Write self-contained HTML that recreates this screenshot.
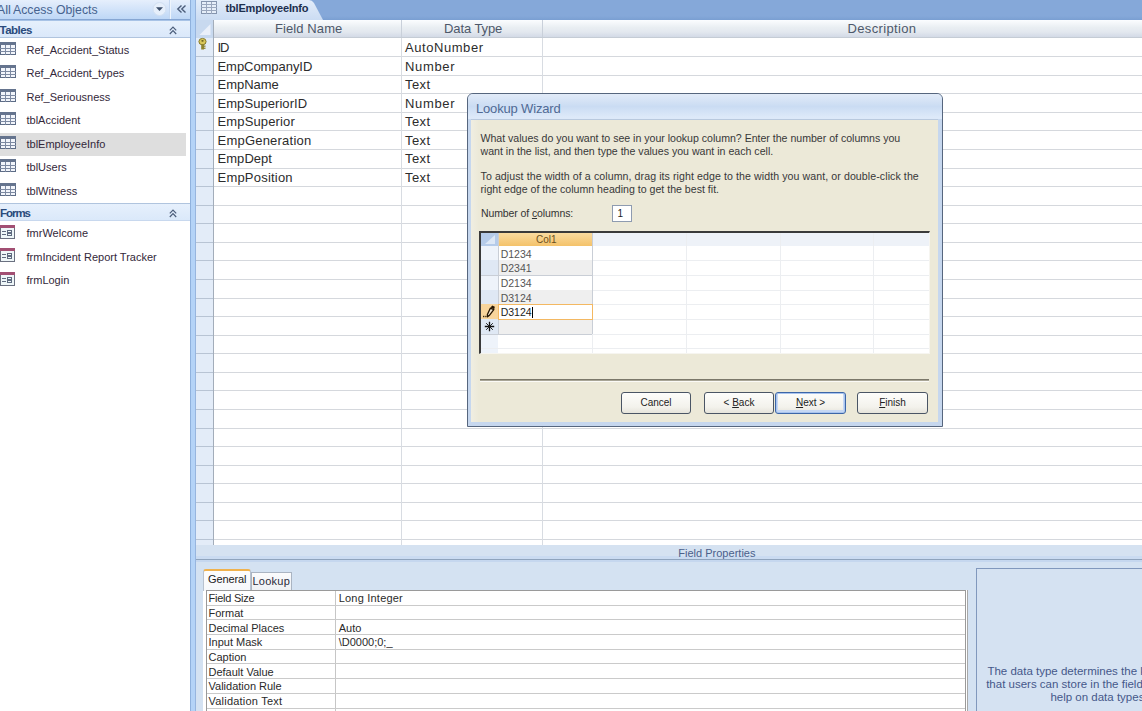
<!DOCTYPE html>
<html><head><meta charset="utf-8">
<style>
*{margin:0;padding:0;box-sizing:border-box}
html,body{width:1142px;height:711px;overflow:hidden;background:#fff;font-family:"Liberation Sans",sans-serif}
.a{position:absolute}
.t{position:absolute;white-space:nowrap;line-height:1}
svg.a{overflow:visible}
</style></head><body>
<div class="a" style="left:0px;top:0px;width:190px;height:711px;background:#fff"></div>
<div class="a" style="left:0px;top:0px;width:190px;height:19px;background:linear-gradient(#e6effc,#bed7f6)"></div>
<div class="t" style="left:-3.5px;top:3px;font-size:13px;color:#46638f;">All</div>
<div class="t" style="left:12.9px;top:3px;font-size:13px;color:#46638f;transform:scaleX(0.944);transform-origin:0 0">Access Objects</div>
<div class="a" style="left:169px;top:0px;width:1px;height:19px;background:#c4d7f0"></div>
<div class="a" style="left:170px;top:0px;width:1px;height:19px;background:#eef5fd"></div>
<svg class="a" style="left:150px;top:0" width="40" height="19"><circle cx="9.5" cy="9" r="6.5" fill="#e6effb" stroke="#d2e0f2"/><path d="M6 7.2 H13 L9.5 11 Z" fill="#3d4f6a"/><path d="M31.5 5.5 L27.8 9 L31.5 12.5 M35.5 5.5 L31.8 9 L35.5 12.5" fill="none" stroke="#4b5d7a" stroke-width="1.4"/></svg>
<div class="a" style="left:0px;top:19px;width:190px;height:1px;background:#86a6d3"></div>
<div class="a" style="left:0px;top:20px;width:190px;height:1px;background:#a8c3e6"></div>
<div class="a" style="left:0px;top:21px;width:190px;height:17px;background:linear-gradient(#e6f0fc,#dae8fa)"></div>
<div class="a" style="left:0px;top:37px;width:190px;height:1px;background:#b0c4de"></div>
<div class="t" style="left:-0.5px;top:25px;font-size:11.5px;color:#2a4a7c;font-weight:bold;letter-spacing:-0.516px;">Tables</div>
<svg class="a" style="left:165px;top:22px" width="16" height="16"><path d="M4.8 8.3 L8 5 L11.2 8.3 M4.8 12 L8 8.7 L11.2 12" fill="none" stroke="#4b5d7a" stroke-width="1.2"/></svg>
<div class="a" style="left:0px;top:133px;width:186px;height:23px;background:#dedede"></div>
<div class="a" style="left:0px;top:203px;width:190px;height:1px;background:#b0c4de"></div>
<div class="a" style="left:0px;top:204px;width:190px;height:17px;background:linear-gradient(#e6f0fc,#dae8fa)"></div>
<div class="a" style="left:0px;top:220px;width:190px;height:1px;background:#c8d8ee"></div>
<div class="t" style="left:0px;top:208px;font-size:11.5px;color:#2a4a7c;font-weight:bold;letter-spacing:-1.039px;">Forms</div>
<svg class="a" style="left:165px;top:205px" width="16" height="16"><path d="M4.8 8.3 L8 5 L11.2 8.3 M4.8 12 L8 8.7 L11.2 12" fill="none" stroke="#4b5d7a" stroke-width="1.2"/></svg>
<svg class="a" style="left:0px;top:42px" width="17" height="14"><rect x="0.5" y="0.5" width="15" height="12" fill="#f2f5fb" stroke="#5d6c86"/><rect x="0" y="0" width="16" height="3" fill="#65748e"/><path d="M0 6.5 H16 M0 9.5 H16 M5.5 3 V13 M10.5 3 V13" stroke="#7d8aa2" stroke-width="1"/></svg>
<div class="t" style="left:26.5px;top:45px;font-size:11px;color:#33283a;">Ref_Accident_Status</div>
<svg class="a" style="left:0px;top:65px" width="17" height="14"><rect x="0.5" y="0.5" width="15" height="12" fill="#f2f5fb" stroke="#5d6c86"/><rect x="0" y="0" width="16" height="3" fill="#65748e"/><path d="M0 6.5 H16 M0 9.5 H16 M5.5 3 V13 M10.5 3 V13" stroke="#7d8aa2" stroke-width="1"/></svg>
<div class="t" style="left:26.5px;top:68px;font-size:11px;color:#33283a;">Ref_Accident_types</div>
<svg class="a" style="left:0px;top:89px" width="17" height="14"><rect x="0.5" y="0.5" width="15" height="12" fill="#f2f5fb" stroke="#5d6c86"/><rect x="0" y="0" width="16" height="3" fill="#65748e"/><path d="M0 6.5 H16 M0 9.5 H16 M5.5 3 V13 M10.5 3 V13" stroke="#7d8aa2" stroke-width="1"/></svg>
<div class="t" style="left:26.5px;top:92px;font-size:11px;color:#33283a;">Ref_Seriousness</div>
<svg class="a" style="left:0px;top:112px" width="17" height="14"><rect x="0.5" y="0.5" width="15" height="12" fill="#f2f5fb" stroke="#5d6c86"/><rect x="0" y="0" width="16" height="3" fill="#65748e"/><path d="M0 6.5 H16 M0 9.5 H16 M5.5 3 V13 M10.5 3 V13" stroke="#7d8aa2" stroke-width="1"/></svg>
<div class="t" style="left:26.5px;top:115px;font-size:11px;color:#33283a;">tblAccident</div>
<svg class="a" style="left:0px;top:136px" width="17" height="14"><rect x="0.5" y="0.5" width="15" height="12" fill="#f2f5fb" stroke="#5d6c86"/><rect x="0" y="0" width="16" height="3" fill="#65748e"/><path d="M0 6.5 H16 M0 9.5 H16 M5.5 3 V13 M10.5 3 V13" stroke="#7d8aa2" stroke-width="1"/></svg>
<div class="t" style="left:26.5px;top:139px;font-size:11px;color:#33283a;">tblEmployeeInfo</div>
<svg class="a" style="left:0px;top:159px" width="17" height="14"><rect x="0.5" y="0.5" width="15" height="12" fill="#f2f5fb" stroke="#5d6c86"/><rect x="0" y="0" width="16" height="3" fill="#65748e"/><path d="M0 6.5 H16 M0 9.5 H16 M5.5 3 V13 M10.5 3 V13" stroke="#7d8aa2" stroke-width="1"/></svg>
<div class="t" style="left:26.5px;top:162px;font-size:11px;color:#33283a;">tblUsers</div>
<svg class="a" style="left:0px;top:183px" width="17" height="14"><rect x="0.5" y="0.5" width="15" height="12" fill="#f2f5fb" stroke="#5d6c86"/><rect x="0" y="0" width="16" height="3" fill="#65748e"/><path d="M0 6.5 H16 M0 9.5 H16 M5.5 3 V13 M10.5 3 V13" stroke="#7d8aa2" stroke-width="1"/></svg>
<div class="t" style="left:26.5px;top:186px;font-size:11px;color:#33283a;">tblWitness</div>
<svg class="a" style="left:0px;top:225px" width="16" height="15"><rect x="0.5" y="0.5" width="14" height="13" fill="#eef6f8" stroke="#6a7080"/><rect x="0" y="0" width="15" height="3" fill="#a24f73"/><path d="M2 6.5 H6 M2 9.5 H6" stroke="#5f6b80" stroke-width="1"/><rect x="7.5" y="5.5" width="4" height="2" fill="none" stroke="#5f6b80"/><rect x="7.5" y="8.5" width="4" height="2" fill="none" stroke="#5f6b80"/></svg>
<div class="t" style="left:26.5px;top:228px;font-size:11px;color:#33283a;">fmrWelcome</div>
<svg class="a" style="left:0px;top:248px" width="16" height="15"><rect x="0.5" y="0.5" width="14" height="13" fill="#eef6f8" stroke="#6a7080"/><rect x="0" y="0" width="15" height="3" fill="#a24f73"/><path d="M2 6.5 H6 M2 9.5 H6" stroke="#5f6b80" stroke-width="1"/><rect x="7.5" y="5.5" width="4" height="2" fill="none" stroke="#5f6b80"/><rect x="7.5" y="8.5" width="4" height="2" fill="none" stroke="#5f6b80"/></svg>
<div class="t" style="left:26.5px;top:252px;font-size:11px;color:#33283a;">frmIncident Report Tracker</div>
<svg class="a" style="left:0px;top:272px" width="16" height="15"><rect x="0.5" y="0.5" width="14" height="13" fill="#eef6f8" stroke="#6a7080"/><rect x="0" y="0" width="15" height="3" fill="#a24f73"/><path d="M2 6.5 H6 M2 9.5 H6" stroke="#5f6b80" stroke-width="1"/><rect x="7.5" y="5.5" width="4" height="2" fill="none" stroke="#5f6b80"/><rect x="7.5" y="8.5" width="4" height="2" fill="none" stroke="#5f6b80"/></svg>
<div class="t" style="left:26.5px;top:275px;font-size:11px;color:#33283a;">frmLogin</div>
<div class="a" style="left:190px;top:0px;width:1px;height:711px;background:#8fb1dd"></div>
<div class="a" style="left:191px;top:0px;width:4px;height:711px;background:#b4d3f7"></div>
<div class="a" style="left:195px;top:0px;width:1px;height:711px;background:#97b5de"></div>
<div class="a" style="left:196px;top:0px;width:946px;height:20px;background:linear-gradient(#85a8d9 80%,#7a9fd2)"></div>
<svg class="a" style="left:196px;top:0" width="130" height="20"><defs><linearGradient id="tg" x1="0" y1="0" x2="0" y2="1"><stop offset="0" stop-color="#e2ecf9"/><stop offset="1" stop-color="#cbdcf3"/></linearGradient></defs><path d="M0 0 H113 Q116 0 118 3 L127 20 H0 Z" fill="url(#tg)"/></svg>
<svg class="a" style="left:201px;top:1px" width="17" height="14"><rect x="0.5" y="0.5" width="15" height="12" fill="#e6eef9" stroke="#8494ae"/><path d="M0 3.5 H16 M0 6.5 H16 M0 9.5 H16 M5.5 1 V13 M10.5 1 V13" stroke="#9aa7be" stroke-width="1"/></svg>
<div class="t" style="left:225.5px;top:3px;font-size:11px;color:#1d2f4e;font-weight:bold;letter-spacing:-0.183px;">tblEmployeeInfo</div>
<div class="a" style="left:196px;top:20px;width:946px;height:525px;background:#fff"></div>
<div class="a" style="left:213px;top:20px;width:929px;height:17px;background:linear-gradient(#fbfdff,#e9eef2 45%,#e3e8ef 70%,#d3dae6)"></div>
<div class="a" style="left:196px;top:37px;width:946px;height:1px;background:#c5ccd5"></div>
<div class="a" style="left:196px;top:20px;width:17px;height:18px;background:#c8d9ef"></div>
<svg class="a" style="left:196px;top:20px" width="17" height="18"><path d="M14.5 4 V15 H3.5 Z" fill="#eaf0fa"/></svg>
<div class="a" style="left:196px;top:38px;width:17px;height:507px;background:#e3ecf8"></div>
<div class="a" style="left:213px;top:20px;width:1px;height:525px;background:#a3adba"></div>
<div class="a" style="left:214px;top:56px;width:928px;height:1px;background:#d5d8dd"></div>
<div class="a" style="left:196px;top:56px;width:17px;height:1px;background:#b8c4d4"></div>
<div class="a" style="left:214px;top:75px;width:928px;height:1px;background:#d5d8dd"></div>
<div class="a" style="left:196px;top:75px;width:17px;height:1px;background:#b8c4d4"></div>
<div class="a" style="left:214px;top:93px;width:928px;height:1px;background:#d5d8dd"></div>
<div class="a" style="left:196px;top:93px;width:17px;height:1px;background:#b8c4d4"></div>
<div class="a" style="left:214px;top:112px;width:928px;height:1px;background:#d5d8dd"></div>
<div class="a" style="left:196px;top:112px;width:17px;height:1px;background:#b8c4d4"></div>
<div class="a" style="left:214px;top:130px;width:928px;height:1px;background:#d5d8dd"></div>
<div class="a" style="left:196px;top:130px;width:17px;height:1px;background:#b8c4d4"></div>
<div class="a" style="left:214px;top:149px;width:928px;height:1px;background:#d5d8dd"></div>
<div class="a" style="left:196px;top:149px;width:17px;height:1px;background:#b8c4d4"></div>
<div class="a" style="left:214px;top:168px;width:928px;height:1px;background:#d5d8dd"></div>
<div class="a" style="left:196px;top:168px;width:17px;height:1px;background:#b8c4d4"></div>
<div class="a" style="left:214px;top:186px;width:928px;height:1px;background:#d5d8dd"></div>
<div class="a" style="left:196px;top:186px;width:17px;height:1px;background:#b8c4d4"></div>
<div class="a" style="left:214px;top:205px;width:928px;height:1px;background:#d5d8dd"></div>
<div class="a" style="left:196px;top:205px;width:17px;height:1px;background:#b8c4d4"></div>
<div class="a" style="left:214px;top:223px;width:928px;height:1px;background:#d5d8dd"></div>
<div class="a" style="left:196px;top:223px;width:17px;height:1px;background:#b8c4d4"></div>
<div class="a" style="left:214px;top:242px;width:928px;height:1px;background:#d5d8dd"></div>
<div class="a" style="left:196px;top:242px;width:17px;height:1px;background:#b8c4d4"></div>
<div class="a" style="left:214px;top:260px;width:928px;height:1px;background:#d5d8dd"></div>
<div class="a" style="left:196px;top:260px;width:17px;height:1px;background:#b8c4d4"></div>
<div class="a" style="left:214px;top:279px;width:928px;height:1px;background:#d5d8dd"></div>
<div class="a" style="left:196px;top:279px;width:17px;height:1px;background:#b8c4d4"></div>
<div class="a" style="left:214px;top:298px;width:928px;height:1px;background:#d5d8dd"></div>
<div class="a" style="left:196px;top:298px;width:17px;height:1px;background:#b8c4d4"></div>
<div class="a" style="left:214px;top:316px;width:928px;height:1px;background:#d5d8dd"></div>
<div class="a" style="left:196px;top:316px;width:17px;height:1px;background:#b8c4d4"></div>
<div class="a" style="left:214px;top:335px;width:928px;height:1px;background:#d5d8dd"></div>
<div class="a" style="left:196px;top:335px;width:17px;height:1px;background:#b8c4d4"></div>
<div class="a" style="left:214px;top:353px;width:928px;height:1px;background:#d5d8dd"></div>
<div class="a" style="left:196px;top:353px;width:17px;height:1px;background:#b8c4d4"></div>
<div class="a" style="left:214px;top:372px;width:928px;height:1px;background:#d5d8dd"></div>
<div class="a" style="left:196px;top:372px;width:17px;height:1px;background:#b8c4d4"></div>
<div class="a" style="left:214px;top:390px;width:928px;height:1px;background:#d5d8dd"></div>
<div class="a" style="left:196px;top:390px;width:17px;height:1px;background:#b8c4d4"></div>
<div class="a" style="left:214px;top:409px;width:928px;height:1px;background:#d5d8dd"></div>
<div class="a" style="left:196px;top:409px;width:17px;height:1px;background:#b8c4d4"></div>
<div class="a" style="left:214px;top:428px;width:928px;height:1px;background:#d5d8dd"></div>
<div class="a" style="left:196px;top:428px;width:17px;height:1px;background:#b8c4d4"></div>
<div class="a" style="left:214px;top:446px;width:928px;height:1px;background:#d5d8dd"></div>
<div class="a" style="left:196px;top:446px;width:17px;height:1px;background:#b8c4d4"></div>
<div class="a" style="left:214px;top:465px;width:928px;height:1px;background:#d5d8dd"></div>
<div class="a" style="left:196px;top:465px;width:17px;height:1px;background:#b8c4d4"></div>
<div class="a" style="left:214px;top:483px;width:928px;height:1px;background:#d5d8dd"></div>
<div class="a" style="left:196px;top:483px;width:17px;height:1px;background:#b8c4d4"></div>
<div class="a" style="left:214px;top:502px;width:928px;height:1px;background:#d5d8dd"></div>
<div class="a" style="left:196px;top:502px;width:17px;height:1px;background:#b8c4d4"></div>
<div class="a" style="left:214px;top:520px;width:928px;height:1px;background:#d5d8dd"></div>
<div class="a" style="left:196px;top:520px;width:17px;height:1px;background:#b8c4d4"></div>
<div class="a" style="left:214px;top:539px;width:928px;height:1px;background:#d5d8dd"></div>
<div class="a" style="left:196px;top:539px;width:17px;height:1px;background:#b8c4d4"></div>
<div class="a" style="left:401px;top:38px;width:1px;height:507px;background:#d8dce2"></div>
<div class="a" style="left:542px;top:38px;width:1px;height:507px;background:#d8dce2"></div>
<div class="a" style="left:401px;top:20px;width:1px;height:17px;background:#c9d0da"></div>
<div class="a" style="left:542px;top:20px;width:1px;height:17px;background:#c9d0da"></div>
<div class="t" style="left:275px;top:22px;font-size:13px;color:#4d586a;letter-spacing:0.092px;">Field Name</div>
<div class="t" style="left:444px;top:22px;font-size:13px;color:#4d586a;letter-spacing:-0.091px;">Data Type</div>
<div class="t" style="left:847.5px;top:22px;font-size:13px;color:#4d586a;letter-spacing:0.357px;">Description</div>
<div class="t" style="left:217.5px;top:41px;font-size:13px;color:#2c2c2c;letter-spacing:-1.2px;">ID</div>
<div class="t" style="left:405px;top:41px;font-size:13px;color:#2c2c2c;letter-spacing:0.557px;">AutoNumber</div>
<div class="t" style="left:217.5px;top:60px;font-size:13px;color:#2c2c2c;letter-spacing:-0.052px;">EmpCompanyID</div>
<div class="t" style="left:405px;top:60px;font-size:13px;color:#2c2c2c;letter-spacing:0.67px;">Number</div>
<div class="t" style="left:217.5px;top:78px;font-size:13px;color:#2c2c2c;letter-spacing:-0.02px;">EmpName</div>
<div class="t" style="left:405px;top:78px;font-size:13px;color:#2c2c2c;letter-spacing:0.385px;">Text</div>
<div class="t" style="left:217.5px;top:97px;font-size:13px;color:#2c2c2c;letter-spacing:0.06px;">EmpSuperiorID</div>
<div class="t" style="left:405px;top:97px;font-size:13px;color:#2c2c2c;letter-spacing:0.67px;">Number</div>
<div class="t" style="left:217.5px;top:115px;font-size:13px;color:#2c2c2c;letter-spacing:0.142px;">EmpSuperior</div>
<div class="t" style="left:405px;top:115px;font-size:13px;color:#2c2c2c;letter-spacing:0.385px;">Text</div>
<div class="t" style="left:217.5px;top:134px;font-size:13px;color:#2c2c2c;letter-spacing:0.22px;">EmpGeneration</div>
<div class="t" style="left:405px;top:134px;font-size:13px;color:#2c2c2c;letter-spacing:0.385px;">Text</div>
<div class="t" style="left:217.5px;top:152px;font-size:13px;color:#2c2c2c;letter-spacing:0.049px;">EmpDept</div>
<div class="t" style="left:405px;top:152px;font-size:13px;color:#2c2c2c;letter-spacing:0.385px;">Text</div>
<div class="t" style="left:217.5px;top:171px;font-size:13px;color:#2c2c2c;letter-spacing:0.212px;">EmpPosition</div>
<div class="t" style="left:405px;top:171px;font-size:13px;color:#2c2c2c;letter-spacing:0.385px;">Text</div>
<svg class="a" style="left:197px;top:38px" width="12" height="13"><ellipse cx="5.5" cy="3.6" rx="3.6" ry="3.2" fill="#d8c65a" stroke="#857a2c" stroke-width="1"/><ellipse cx="5.5" cy="2.8" rx="1.2" ry="0.9" fill="#6a611e"/><rect x="4.2" y="6" width="2.8" height="5.5" fill="#8f8430"/><rect x="6.5" y="7.5" width="2" height="1.3" fill="#8f8430"/><rect x="6.5" y="9.6" width="2" height="1.3" fill="#8f8430"/></svg>
<div class="a" style="left:196px;top:545px;width:946px;height:166px;background:#d4e2f2"></div>
<div class="a" style="left:196px;top:545px;width:946px;height:11px;background:#d5e2f1"></div>
<div class="a" style="left:196px;top:556px;width:946px;height:3px;background:#cadbf1"></div>
<div class="a" style="left:196px;top:559px;width:946px;height:1px;background:#8fa4bd"></div>
<div class="a" style="left:196px;top:560px;width:946px;height:2px;background:#c5d7ef"></div>
<div class="t" style="left:678.2px;top:548px;font-size:11px;color:#4a5f8c;letter-spacing:0.017px;">Field Properties</div>
<div class="a" style="left:203px;top:589px;width:4px;height:122px;background:#fff"></div>
<div class="a" style="left:203px;top:569px;width:48px;height:22px;background:linear-gradient(#fdfdfd,#f6f8fb);border:1px solid #b8c2cf;border-bottom:none;border-top:2px solid #f0b24e;border-radius:3px 3px 0 0"></div>
<div class="a" style="left:251px;top:572px;width:41px;height:18px;background:linear-gradient(#fbfbfc,#eef1f5);border:1px solid #aab4c2;border-bottom:none"></div>
<div class="t" style="left:208px;top:574px;font-size:11px;color:#222;letter-spacing:-0.123px;">General</div>
<div class="t" style="left:252.5px;top:576px;font-size:11px;color:#2a2a3a;letter-spacing:0.241px;">Lookup</div>
<div class="a" style="left:206px;top:590px;width:760px;height:121px;background:#fff;border:1px solid #9a9a9a;border-bottom:none;border-right:none"></div>
<div class="a" style="left:965px;top:590px;width:1px;height:121px;background:#9a9a9a"></div>
<div class="a" style="left:967px;top:590px;width:1px;height:121px;background:#a8a8a8"></div>
<div class="a" style="left:966px;top:590px;width:1px;height:121px;background:#fff"></div>
<div class="a" style="left:335px;top:591px;width:1px;height:120px;background:#c6c6c6"></div>
<div class="a" style="left:207px;top:605px;width:758px;height:1px;background:#cacaca"></div>
<div class="t" style="left:208.5px;top:593px;font-size:11px;color:#2a2a2a;letter-spacing:-0.233px;">Field Size</div>
<div class="t" style="left:338.7px;top:593px;font-size:11px;color:#2a2a2a;letter-spacing:0.211px;">Long Integer</div>
<div class="a" style="left:207px;top:619px;width:758px;height:1px;background:#cacaca"></div>
<div class="t" style="left:208.5px;top:608px;font-size:11px;color:#2a2a2a;">Format</div>
<div class="a" style="left:207px;top:634px;width:758px;height:1px;background:#cacaca"></div>
<div class="t" style="left:208.5px;top:623px;font-size:11px;color:#2a2a2a;">Decimal Places</div>
<div class="t" style="left:338.7px;top:623px;font-size:11px;color:#2a2a2a;">Auto</div>
<div class="a" style="left:207px;top:649px;width:758px;height:1px;background:#cacaca"></div>
<div class="t" style="left:208.5px;top:637px;font-size:11px;color:#2a2a2a;">Input Mask</div>
<div class="t" style="left:338.7px;top:637px;font-size:11px;color:#2a2a2a;">\D0000;0;_</div>
<div class="a" style="left:207px;top:663px;width:758px;height:1px;background:#cacaca"></div>
<div class="t" style="left:208.5px;top:652px;font-size:11px;color:#2a2a2a;">Caption</div>
<div class="a" style="left:207px;top:678px;width:758px;height:1px;background:#cacaca"></div>
<div class="t" style="left:208.5px;top:667px;font-size:11px;color:#2a2a2a;">Default Value</div>
<div class="a" style="left:207px;top:693px;width:758px;height:1px;background:#cacaca"></div>
<div class="t" style="left:208.5px;top:681px;font-size:11px;color:#2a2a2a;">Validation Rule</div>
<div class="a" style="left:207px;top:708px;width:758px;height:1px;background:#cacaca"></div>
<div class="t" style="left:208.5px;top:696px;font-size:11px;color:#2a2a2a;letter-spacing:0.219px;">Validation Text</div>
<div class="a" style="left:976px;top:568px;width:166px;height:143px;background:#d5e2f2;border-left:1px solid #8198bd;border-top:1px solid #8198bd"></div>
<div class="t" style="left:979px;top:666px;width:240px;font-size:11.5px;color:#45588a;text-align:center">The data type determines the kind of values</div>
<div class="t" style="left:979px;top:679px;width:240px;font-size:11.5px;color:#45588a;text-align:center">that users can store in the field. Press F1 for</div>
<div class="t" style="left:979px;top:692px;width:240px;font-size:11.5px;color:#45588a;text-align:center">help on data types.</div>
<div class="a" style="left:467px;top:93px;width:476px;height:334px;border:1px solid #56667e;border-radius:6px 6px 0 0;background:#c6d7ee"></div>
<div class="a" style="left:468px;top:94px;width:474px;height:25px;background:linear-gradient(#e2ebf8,#cadcf3 50%,#dde9f9 92%);border-radius:5px 5px 0 0"></div>
<div class="a" style="left:471px;top:119px;width:467px;height:1px;background:#b9c9de"></div>
<div class="a" style="left:471px;top:120px;width:467px;height:302px;background:#ece9d8"></div>
<div class="a" style="left:471px;top:120px;width:8px;height:302px;background:linear-gradient(90deg,#f0eee2,#ece9d8)"></div>
<div class="t" style="left:476px;top:102px;font-size:13px;color:#506a94;letter-spacing:-0.168px;">Lookup Wizard</div>
<div class="t" style="left:480.5px;top:133px;font-size:10.6px;color:#383838;letter-spacing:-0.016px;">What values do you want to see in your lookup column? Enter the number of columns you</div>
<div class="t" style="left:480.5px;top:146px;font-size:10.6px;color:#383838;">want in the list, and then type the values you want in each cell.</div>
<div class="t" style="left:480.5px;top:171px;font-size:10.6px;color:#383838;letter-spacing:0.083px;">To adjust the width of a column, drag its right edge to the width you want, or double-click the</div>
<div class="t" style="left:480.5px;top:184px;font-size:10.6px;color:#383838;">right edge of the column heading to get the best fit.</div>
<div class="t" style="left:481px;top:208px;font-size:10.5px;color:#333;letter-spacing:-0.102px;">Number of <u>c</u>olumns:</div>
<div class="a" style="left:612px;top:205px;width:20px;height:17px;background:#fff;border:1px solid #8e9bb0"></div>
<div class="t" style="left:617.5px;top:209px;font-size:10px;color:#222;">1</div>
<div class="a" style="left:479px;top:231px;width:451px;height:123px;background:#fff;border-top:2px solid #3a3a3a;border-left:2px solid #3a3a3a;border-right:1px solid #f6f5f0;border-bottom:1px solid #f6f5f0"></div>
<div class="a" style="left:481px;top:233px;width:448px;height:13px;background:#eef2f8"></div>
<div class="a" style="left:498px;top:233px;width:94px;height:13px;background:linear-gradient(#fadb9f,#f4c26a)"></div>
<div class="a" style="left:481px;top:233px;width:17px;height:13px;background:#b5cbe9"></div>
<svg class="a" style="left:481px;top:233px" width="17" height="13"><path d="M14 2 V11 H4 Z" fill="#dde8f6"/></svg>
<div class="t" style="left:536px;top:235px;font-size:10px;color:#6b5020;">Col1</div>
<div class="a" style="left:481px;top:246px;width:17px;height:107px;background:#eef3fa"></div>
<div class="a" style="left:481px;top:260px;width:448px;height:1px;background:#eceef1"></div>
<div class="a" style="left:481px;top:260px;width:112px;height:1px;background:#c9ced6"></div>
<div class="t" style="left:500.7px;top:249px;font-size:10.5px;color:#555;">D1234</div>
<div class="a" style="left:498px;top:260px;width:94px;height:15px;background:#efefef"></div>
<div class="a" style="left:481px;top:260px;width:17px;height:15px;background:#dfe8f4"></div>
<div class="a" style="left:481px;top:275px;width:448px;height:1px;background:#eceef1"></div>
<div class="a" style="left:481px;top:275px;width:112px;height:1px;background:#c9ced6"></div>
<div class="t" style="left:500.7px;top:263px;font-size:10.5px;color:#555;">D2341</div>
<div class="a" style="left:481px;top:290px;width:448px;height:1px;background:#eceef1"></div>
<div class="a" style="left:481px;top:290px;width:112px;height:1px;background:#c9ced6"></div>
<div class="t" style="left:500.7px;top:278px;font-size:10.5px;color:#555;">D2134</div>
<div class="a" style="left:498px;top:290px;width:94px;height:14px;background:#efefef"></div>
<div class="a" style="left:481px;top:290px;width:17px;height:14px;background:#dfe8f4"></div>
<div class="a" style="left:481px;top:304px;width:448px;height:1px;background:#eceef1"></div>
<div class="a" style="left:481px;top:304px;width:112px;height:1px;background:#c9ced6"></div>
<div class="t" style="left:500.7px;top:293px;font-size:10.5px;color:#555;">D3124</div>
<div class="a" style="left:481px;top:319px;width:448px;height:1px;background:#eceef1"></div>
<div class="a" style="left:481px;top:319px;width:112px;height:1px;background:#c9ced6"></div>
<div class="a" style="left:498px;top:319px;width:94px;height:15px;background:#efefef"></div>
<div class="a" style="left:481px;top:319px;width:17px;height:15px;background:#dfe8f4"></div>
<div class="a" style="left:481px;top:334px;width:448px;height:1px;background:#eceef1"></div>
<div class="a" style="left:481px;top:334px;width:112px;height:1px;background:#c9ced6"></div>
<div class="a" style="left:481px;top:348px;width:448px;height:1px;background:#eceef1"></div>
<div class="a" style="left:592px;top:233px;width:1px;height:120px;background:#eceef1"></div>
<div class="a" style="left:686px;top:233px;width:1px;height:120px;background:#eceef1"></div>
<div class="a" style="left:780px;top:233px;width:1px;height:120px;background:#eceef1"></div>
<div class="a" style="left:873px;top:233px;width:1px;height:120px;background:#eceef1"></div>
<div class="a" style="left:498px;top:233px;width:1px;height:101px;background:#c9ced6"></div>
<div class="a" style="left:592px;top:233px;width:1px;height:101px;background:#c9ced6"></div>
<div class="a" style="left:481px;top:304px;width:17px;height:15px;background:#f8d59c"></div>
<div class="a" style="left:498px;top:304px;width:95px;height:16px;border:1px solid #f3b862;background:#fff"></div>
<div class="t" style="left:500.7px;top:307px;font-size:10.5px;color:#222;">D3124</div>
<div class="a" style="left:532px;top:307px;width:1px;height:11px;background:#000"></div>
<svg class="a" style="left:482px;top:305px" width="14" height="13"><path d="M8.3 3.2 L11.8 4.6 L7.2 10.6 L5.6 11.8 L5.4 9.6 Z" fill="#efe4cf" stroke="#241400" stroke-width="1.3" stroke-linejoin="round"/><path d="M8.6 2.6 L10.2 0.6 L12.8 1.8 L12.2 4.2 Z" fill="#241400"/><rect x="1" y="10.8" width="1.4" height="1.4" fill="#3a2a10"/><rect x="3.2" y="10.8" width="1.4" height="1.4" fill="#3a2a10"/></svg>
<svg class="a" style="left:484px;top:321px" width="11" height="11"><path d="M5.5 0.8 V10.2 M0.8 5.5 H10.2" stroke="#111" stroke-width="1.3"/><path d="M2.2 2.2 L8.8 8.8 M8.8 2.2 L2.2 8.8" stroke="#222" stroke-width="1"/></svg>
<div class="a" style="left:480px;top:379px;width:449px;height:1px;background:#7b786a"></div>
<div class="a" style="left:480px;top:380px;width:449px;height:1px;background:#a8a596"></div>
<div class="a" style="left:480px;top:381px;width:449px;height:1px;background:#fbfaf6"></div>
<div class="a" style="left:621px;top:392px;width:70px;height:22px;border:1px solid #4a5565;border-radius:3px;background:linear-gradient(#fdfdfb,#f3f2ec 70%,#e6e4db)"></div>
<div class="t" style="left:621px;top:398px;width:70px;text-align:center;font-size:10px;color:#222">Cancel</div>
<div class="a" style="left:704px;top:392px;width:70px;height:22px;border:1px solid #4a5565;border-radius:3px;background:linear-gradient(#fdfdfb,#f3f2ec 70%,#e6e4db)"></div>
<div class="t" style="left:704px;top:398px;width:70px;text-align:center;font-size:10px;color:#222">&lt; <u>B</u>ack</div>
<div class="a" style="left:775px;top:392px;width:71px;height:22px;border:1px solid #3c66a8;border-radius:3px;background:linear-gradient(#fdfdfb,#f3f2ec 70%,#e6e4db);box-shadow:inset 0 0 0 1px #a9c4ee, inset 0 -1px 0 2px #c6d8f4"></div>
<div class="t" style="left:775px;top:398px;width:71px;text-align:center;font-size:10px;color:#222"><u>N</u>ext &gt;</div>
<div class="a" style="left:857px;top:392px;width:71px;height:22px;border:1px solid #4a5565;border-radius:3px;background:linear-gradient(#fdfdfb,#f3f2ec 70%,#e6e4db)"></div>
<div class="t" style="left:857px;top:398px;width:71px;text-align:center;font-size:10px;color:#222"><u>F</u>inish</div>
</body></html>
